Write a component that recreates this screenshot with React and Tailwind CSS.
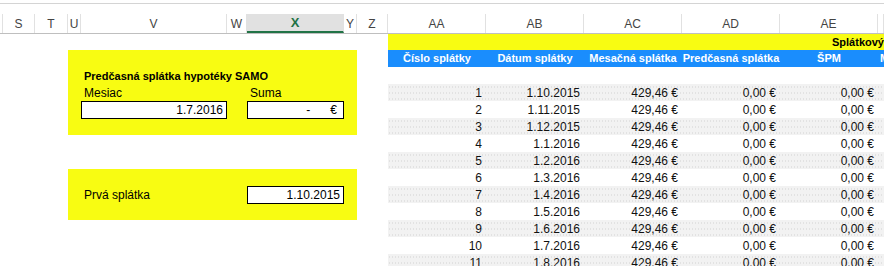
import React from 'react'

const font = { fontFamily: '"Liberation Sans", Arial, sans-serif' }

const leftCols = [
  { w: 'w-[3px]', label: '' },
  { w: 'w-[32px]', label: 'S' },
  { w: 'w-[33px]', label: 'T' },
  { w: 'w-[13px]', label: 'U' },
  { w: 'w-[146px]', label: 'V' },
  { w: 'w-[20px]', label: 'W' },
  { w: 'w-[97px]', label: 'X', active: true },
  { w: 'w-[13px]', label: 'Y' },
  { w: 'w-[31px]', label: 'Z' },
  { w: 'w-[98px]', label: 'AA' },
  { w: 'w-[98px]', label: 'AB' },
  { w: 'w-[98px]', label: 'AC' },
  { w: 'w-[98px]', label: 'AD' },
  { w: 'w-[98px]', label: 'AE' },
  { w: 'flex-1', label: '' },
]

const dates = [
  '1.10.2015', '1.11.2015', '1.12.2015', '1.1.2016', '1.2.2016', '1.3.2016',
  '1.4.2016', '1.5.2016', '1.6.2016', '1.7.2016', '1.8.2016',
]

function ColumnHeaders() {
  return (
    <div className="h-[31px] border-t border-[#d4d4d4] mt-[3px] border-b border-b-[#bfbfbf] flex items-end">
      {leftCols.map((c, i) => (
        <div
          key={i}
          className={`${c.w} shrink-0 h-[19px] flex items-center justify-center text-[12px] border-r border-[#e1e1e1] ${
            c.active
              ? 'bg-[#e1e1e1] border-b-2 border-b-[#217346] text-[#217346] font-bold text-[13px]'
              : 'text-[#444]'
          }`}
        >
          {c.label}
        </div>
      ))}
    </div>
  )
}

function Box({ children, className = '' }) {
  return (
    <div className={`h-[18px] border border-black bg-white flex items-center justify-end text-[12px] ${className}`}>
      {children}
    </div>
  )
}

function LeftPanel() {
  return (
    <div className="w-[388px] shrink-0 pt-[16px]">
      {/* Predčasná splátka */}
      <div className="ml-[68px] w-[289px] h-[85px] bg-[#f8fc12] pt-[17px]">
        <div className="h-[17px] pl-[16px] flex items-end text-[11px] font-bold">
          Predčasná splátka hypotéky SAMO
        </div>
        <div className="h-[17px] flex items-center text-[12px]">
          <span className="w-[179px] pl-[16px]">Mesiac</span>
          <span className="pl-[3px]">Suma</span>
        </div>
        <div className="h-[17px] flex">
          <Box className="ml-[13px] w-[146px] pr-[3px]">1.7.2016</Box>
          <Box className="ml-[20px] w-[97px] pr-[6px] gap-[20px]">
            <span>-</span>
            <span>€</span>
          </Box>
        </div>
      </div>

      {/* Prvá splátka */}
      <div className="ml-[68px] mt-[34px] w-[289px] h-[51px] bg-[#f8fc12] pt-[17px]">
        <div className="h-[17px] flex items-center text-[12px]">
          <span className="w-[179px] pl-[16px]">Prvá splátka</span>
          <Box className="w-[97px] pr-[3px]">1.10.2015</Box>
        </div>
      </div>
    </div>
  )
}

function Cell({ children }) {
  return (
    <div className="w-[98px] shrink-0 pr-[4px] flex items-center justify-end">{children}</div>
  )
}

function Schedule() {
  return (
    <div className="flex-1 overflow-hidden">
      <div className="h-[16px] bg-[#f8fc12] flex items-center text-[11px] font-bold whitespace-nowrap">
        <span className="pl-[444px]">Splátkový kalendár</span>
      </div>
      <div className="h-[17px] bg-[#1a8dfd] flex items-center text-white text-[11px] font-bold whitespace-nowrap">
        {['Číslo splátky', 'Dátum splátky', 'Mesačná splátka', 'Predčasná splátka', 'ŠPM'].map((h) => (
          <div key={h} className="w-[98px] shrink-0 flex justify-center">{h}</div>
        ))}
        <div className="pl-[2px]">Mesačný úrok</div>
      </div>
      <div className="h-[17px]" />
      {dates.map((d, i) => (
        <div
          key={d}
          className={`h-[17px] flex text-[12px] text-[#111] ${
            i % 2 === 0
              ? 'bg-[#f2f2f2] bg-[radial-gradient(circle,#e2e2e2_0.6px,transparent_0.9px)] bg-[length:3px_6px]'
              : 'bg-white'
          }`}
        >
          <Cell>{i + 1}</Cell>
          <Cell>{d}</Cell>
          <Cell>429,46 €</Cell>
          <Cell>0,00 €</Cell>
          <Cell>0,00 €</Cell>
        </div>
      ))}
    </div>
  )
}

export default function App() {
  return (
    <div className="w-[884px] h-[266px] overflow-hidden bg-white text-black" style={font}>
      <ColumnHeaders />
      <div className="flex">
        <LeftPanel />
        <Schedule />
      </div>
    </div>
  )
}
